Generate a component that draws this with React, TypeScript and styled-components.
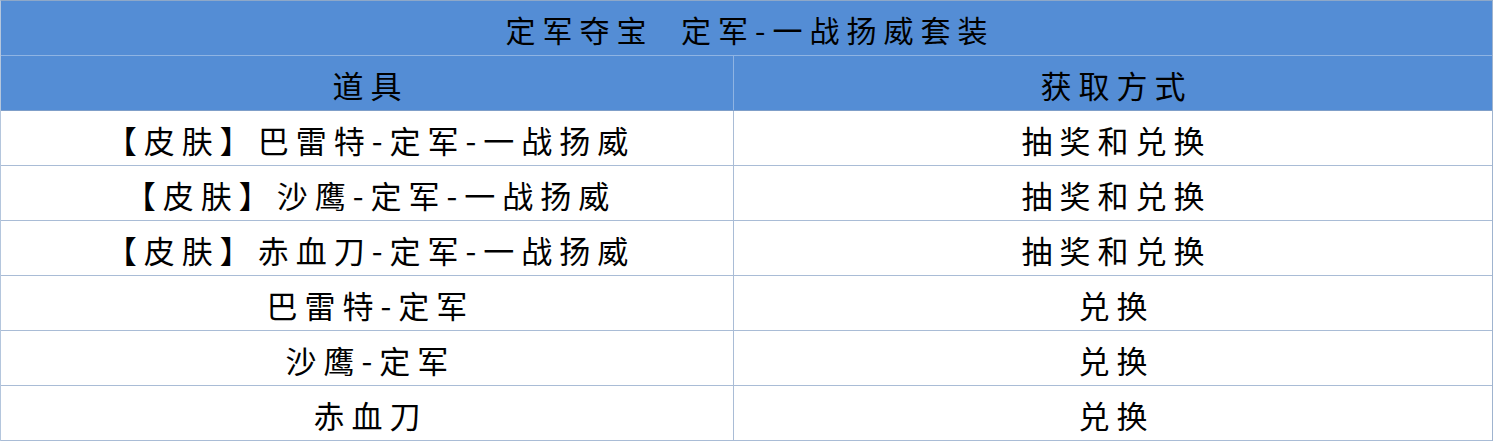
import styled, { createGlobalStyle } from "styled-components";

const GlobalStyle = createGlobalStyle`
  html, body {
    margin: 0;
    padding: 0;
    background: #ffffff;
  }
  body {
    font-family: "Noto Sans CJK SC", "Noto Sans", sans-serif;
  }
`;

interface IRow {
  item: string;
  source: string;
}

const rows: IRow[] = [
  { item: "【皮肤】巴雷特-定军-一战扬威", source: "抽奖和兑换" },
  { item: "【皮肤】沙鹰-定军-一战扬威", source: "抽奖和兑换" },
  { item: "【皮肤】赤血刀-定军-一战扬威", source: "抽奖和兑换" },
  { item: "巴雷特-定军", source: "兑换" },
  { item: "沙鹰-定军", source: "兑换" },
  { item: "赤血刀", source: "兑换" },
];

const App = () => {
  return (
    <>
      <GlobalStyle />
      <Sheet>
        <TitleRow>
          <Cell $size={30}>定军夺宝&nbsp;&nbsp;定军-一战扬威套装</Cell>
        </TitleRow>
        <HeaderRow>
          <Cell $divider="#8fb4e3">道具</Cell>
          <Cell>获取方式</Cell>
        </HeaderRow>
        {rows.map((row) => (
          <DataRow key={row.item}>
            <Cell $divider="#a9bcd6">{row.item}</Cell>
            <Cell>{row.source}</Cell>
          </DataRow>
        ))}
      </Sheet>
    </>
  );
};

const Sheet = styled.div`
  display: flex;
  flex-direction: column;
  width: 1493px;
  box-sizing: border-box;
  border-top: 1px solid #8ea8c8;
  border-left: 1px solid #b4c6dd;
  border-right: 1px solid #9fb4cf;
  color: #000000;
`;

const Row = styled.div`
  display: grid;
  height: 55px;
  box-sizing: border-box;
`;

const TitleRow = styled(Row)`
  grid-template-columns: 1fr;
  background: #548dd5;
  border-bottom: 1px solid #8fb4e3;
`;

const HeaderRow = styled(Row)`
  grid-template-columns: 733px 1fr;
  background: #548dd5;
  border-bottom: 1px solid #7f9fc9;
`;

const DataRow = styled(Row)`
  grid-template-columns: 733px 1fr;
  background: #ffffff;
  border-bottom: 1px solid #a9bcd6;
`;

const Cell = styled.div<{ $divider?: string; $size?: number }>`
  display: flex;
  align-items: center;
  justify-content: center;
  box-sizing: border-box;
  padding-left: 7px;
  padding-top: 2px;
  font-size: ${(props) => props.$size ?? 31}px;
  letter-spacing: 7px;
  line-height: 1;
  white-space: nowrap;
  border-right: ${(props) =>
    props.$divider ? `1px solid ${props.$divider}` : "none"};
`;

export default App;
